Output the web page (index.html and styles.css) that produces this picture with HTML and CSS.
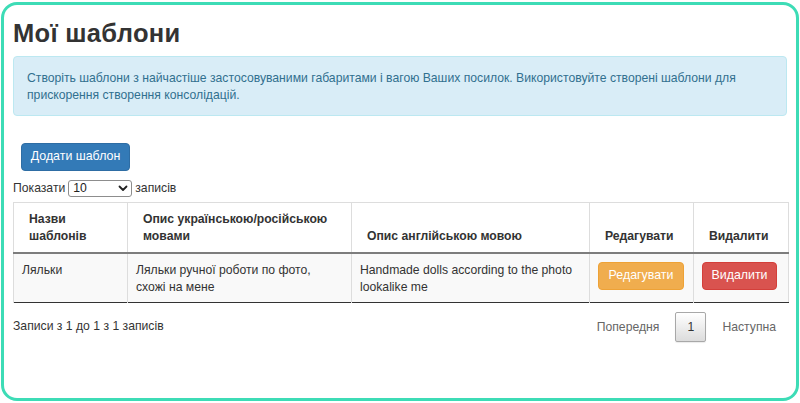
FILE: index.html
```html
<!DOCTYPE html>
<html lang="uk">
<head>
<meta charset="utf-8">
<title>Мої шаблони</title>
<link rel="stylesheet" href="styles.css">
</head>
<body>
<div class="frame">
  <h1 class="title">Мої шаблони</h1>
  <div class="alert">Створіть шаблони з найчастіше застосовуваними габаритами і вагою Ваших посилок. Використовуйте створені шаблони для прискорення створення консолідацій.</div>
  <div class="add-wrap"><button class="btn btn-primary">Додати шаблон</button></div>
  <div class="length">Показати
    <span class="select"><span>10</span><svg width="10" height="7" viewBox="0 0 10 7"><path d="M1.5 1.5 L5 5 L8.5 1.5" fill="none" stroke="#222" stroke-width="1.8" stroke-linecap="round" stroke-linejoin="round"/></svg></span>
    записів</div>
  <table class="grid">
    <colgroup>
      <col class="c1"><col class="c2"><col class="c3"><col class="c4"><col class="c5">
    </colgroup>
    <thead>
      <tr>
        <th>Назви шаблонів</th>
        <th>Опис українською/російською мовами</th>
        <th>Опис англійською мовою</th>
        <th>Редагувати</th>
        <th>Видалити</th>
      </tr>
    </thead>
    <tbody>
      <tr>
        <td>Ляльки</td>
        <td>Ляльки ручної роботи по фото, схожі на мене</td>
        <td>Handmade dolls according to the photo lookalike me</td>
        <td><button class="btn btn-warning">Редагувати</button></td>
        <td><button class="btn btn-danger">Видалити</button></td>
      </tr>
    </tbody>
  </table>
  <div class="footer">
    <div class="info">Записи з 1 до 1 з 1 записів</div>
    <div class="paginate">
      <span class="pg disabled">Попередня</span>
      <span class="pg current">1</span>
      <span class="pg disabled">Наступна</span>
    </div>
  </div>
</div>
</body>
</html>
```

FILE: styles.css
```css
* { box-sizing: border-box; }
html, body { margin: 0; padding: 0; background: #fff; }
body {
  font-family: "Liberation Sans", Arial, sans-serif;
  font-size: 12.2px;
  color: #333;
  width: 800px;
  height: 403px;
  overflow: hidden;
}
.frame {
  margin: 2px 1px 0 1px;
  height: 399px;
  border: 3px solid #3ddcb6;
  border-radius: 16px;
  padding: 13px 9px 0 9px;
}
.title {
  margin: 0 0 8px 0;
  font-size: 25.5px;
  line-height: 30px;
  font-weight: bold;
  color: #333;
  letter-spacing: 0.3px;
}
.alert {
  background: #d9edf7;
  border: 1px solid #bce8f1;
  border-radius: 4px;
  color: #31708f;
  padding: 13px 13px 10px 13px;
  line-height: 17.4px;
}
.add-wrap { padding: 27px 0 0 8px; display: flex; }
.btn {
  font-family: "Liberation Sans", Arial, sans-serif;
  font-size: 12.4px;
  line-height: 17px;
  color: #fff;
  border-radius: 4px;
  border: 1px solid transparent;
  height: 28px;
  padding: 0 4px;
  white-space: nowrap;
  text-align: center;
  cursor: pointer;
}
.btn-primary { background: #337ab7; border-color: #2e6da4; width: 109px; }
.btn-warning { background: #f0ad4e; border-color: #eea236; width: 86px; }
.btn-danger { background: #d9534f; border-color: #d43f3a; width: 75px; }
.length {
  margin-top: 9px;
  display: flex;
  align-items: center;
  gap: 3px;
  height: 17px;
  line-height: 17px;
}
.select {
  display: inline-flex;
  align-items: center;
  justify-content: space-between;
  width: 64px;
  height: 17px;
  border: 1px solid #8d8d8d;
  border-radius: 3px;
  padding: 0 3px 0 4px;
  color: #222;
  background: #fff;
}
.grid {
  margin-top: 5px;
  width: 775px;
  border-collapse: collapse;
  table-layout: fixed;
  border: 1px solid #ddd;
  border-bottom: 1px solid #333;
}
.c1 { width: 114px; }
.c2 { width: 224px; }
.c3 { width: 238px; }
.c4 { width: 104px; }
.c5 { width: 95px; }
.grid th {
  text-align: left;
  vertical-align: bottom;
  font-weight: bold;
  padding: 8px 18px 6px 15px;
  line-height: 17.4px;
  border-left: 1px solid #ddd;
  border-bottom: 2px solid #7d7d7d;
  color: #333;
}
.grid td {
  vertical-align: top;
  background: #f9f9f9;
  padding: 8px 8px 6px 8px;
  line-height: 17.4px;
  border-left: 1px solid #ddd;
}
.footer {
  display: flex;
  justify-content: space-between;
  align-items: center;
  margin-top: 9px;
  padding-right: 10px;
}
.info { line-height: 30px; margin-top: -2px; }
.paginate { display: flex; align-items: center; }
.pg {
  display: inline-block;
  padding: 6px 15px;
  line-height: 16px;
  color: #666;
  border: 1px solid transparent;
  border-radius: 2px;
}
.pg.current {
  color: #333;
  border: 1px solid #a8a8a8;
  background: linear-gradient(to bottom, #ffffff 0%, #dcdcdc 100%);
  padding: 6px 11px;
  height: 30px;
  line-height: 16px;
  width: 31px;
  text-align: center;
  box-shadow: 0 1px 1px rgba(0,0,0,0.08);
}
.pg:last-child { padding-right: 0; }
```
